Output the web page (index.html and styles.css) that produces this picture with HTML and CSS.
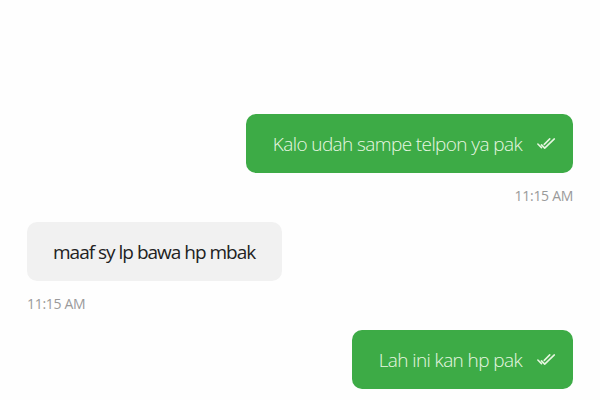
FILE: index.html
```html
<!DOCTYPE html>
<html>
<head>
<meta charset="utf-8">
<link rel="stylesheet" href="styles.css">
</head>
<body>
<div class="chat">
  <div class="msg out">
    <div class="bubble green">
      <span class="text">Kalo udah sampe telpon ya pak</span>
      <svg class="tick" viewBox="0 0 24 16" width="22" height="15"><path d="M2 8.5 L6 12.5 M6 9.5 L9.5 13 L20 3 M9 9 L15 3" fill="none" stroke="#e6f6e0" stroke-width="1.7" stroke-linecap="round" stroke-linejoin="round"/></svg>
    </div>
    <div class="time">11:15 AM</div>
  </div>
  <div class="msg in">
    <div class="bubble gray">
      <span class="text">maaf sy lp bawa hp mbak</span>
    </div>
    <div class="time">11:15 AM</div>
  </div>
  <div class="msg out">
    <div class="bubble green">
      <span class="text">Lah ini kan hp pak</span>
      <svg class="tick" viewBox="0 0 24 16" width="22" height="15"><path d="M2 8.5 L6 12.5 M6 9.5 L9.5 13 L20 3 M9 9 L15 3" fill="none" stroke="#e6f6e0" stroke-width="1.7" stroke-linecap="round" stroke-linejoin="round"/></svg>
    </div>
  </div>
</div>
</body>
</html>
```
FILE: styles.css
```css
html, body {
  margin: 0;
  padding: 0;
  background: #fefefe;
}
.chat {
  width: 600px;
  height: 400px;
  box-sizing: border-box;
  padding: 114px 27px 0 27px;
  display: flex;
  flex-direction: column;
  font-family: "Open Sans", sans-serif;
  overflow: hidden;
}
.msg {
  display: flex;
  flex-direction: column;
}
.msg.out {
  align-items: flex-end;
}
.msg.in {
  align-items: flex-start;
}
.msg.out + .msg.in {
  margin-top: 18px;
}
.msg.in + .msg.out {
  margin-top: 18px;
}
.bubble {
  height: 59px;
  box-sizing: border-box;
  border-radius: 10px;
  display: flex;
  align-items: center;
}
.green {
  background: #3dab46;
  color: #e8f7e2;
  padding: 0 15px 0 27px;
}
.gray {
  background: #f1f1f1;
  color: #222;
  padding: 0 27px 0 26px;
}
.text {
  font-size: 19px;
  font-weight: 300;
  letter-spacing: -0.6px;
}
.gray .text {
  font-weight: 400;
  letter-spacing: -1px;
}
.tick {
  margin-left: 14px;
}
.time {
  font-size: 14px;
  color: #9a9a9a;
  margin-top: 15px;
  line-height: 16px;
  letter-spacing: -0.3px;
}
```
